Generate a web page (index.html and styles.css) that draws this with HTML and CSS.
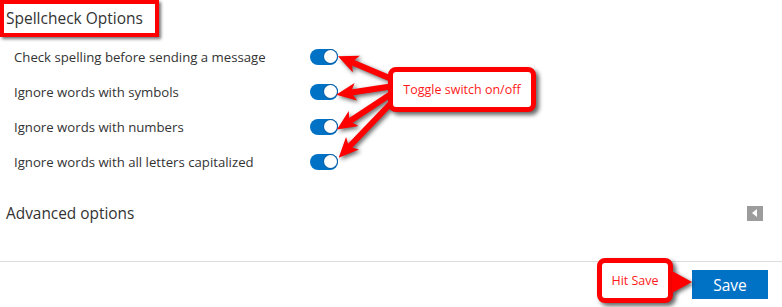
FILE: index.html
```html
<!DOCTYPE html>
<html lang="en">
<head>
    <meta charset="UTF-8">
    <meta name="viewport" content="width=device-width, initial-scale=1.0">
    <title>Spellcheck Options</title>
    <link rel="stylesheet" href="styles.css">
</head>
<body>

    <div class="page">
        <h2 class="heading"><span class="marked">Spellcheck Options</span></h2>

        <div class="options">
            <div class="option">
                <span class="label">Check spelling before sending a message</span>
                <span class="toggle"></span>
            </div>
            <div class="option">
                <span class="label">Ignore words with symbols</span>
                <span class="toggle"></span>
            </div>
            <div class="option">
                <span class="label">Ignore words with numbers</span>
                <span class="toggle"></span>
            </div>
            <div class="option">
                <span class="label">Ignore words with all letters capitalized</span>
                <span class="toggle"></span>
            </div>
        </div>

        <div class="advanced">
            <span>Advanced options</span>
            <span class="expander"></span>
        </div>

        <div class="footer">
            <div class="callout callout-save">Hit Save</div>
            <button class="save">Save</button>
        </div>

        <!-- annotation overlay -->
        <svg class="arrows" width="782" height="307" viewBox="0 0 782 307">
            <defs>
                <marker id="head" markerUnits="userSpaceOnUse" markerWidth="20" markerHeight="20"
                        refX="8" refY="10" orient="auto">
                    <path d="M0,1 L20,10 L0,19 L5,10 z" fill="#ff0000"/>
                </marker>
            </defs>
            <g stroke="#ff0000" stroke-width="6" marker-end="url(#head)">
                <line x1="394" y1="80" x2="349" y2="61"/>
                <line x1="394" y1="86" x2="348" y2="93"/>
                <line x1="394" y1="92" x2="347" y2="123"/>
                <line x1="396" y1="98" x2="347" y2="149"/>
            </g>
        </svg>
        <div class="callout callout-toggle">Toggle switch on/off</div>
    </div>

</body>
</html>
```

FILE: styles.css
```css
/* Page */
body {
    margin: 0;
    font-family: "Open Sans", "Noto Sans", sans-serif;
    color: #333;
    background-color: #fff;
}
.page {
    position: relative;
    width: 782px;
    height: 307px;
    overflow: hidden;
}
/* Heading with red highlight box */
.heading {
    margin: 0;
    font-size: 15.5px;
    font-weight: normal;
}
.marked {
    display: inline-block;
    padding: 5px 12px 5px 2px;
    border: 4px solid #ff0000;
    box-shadow: 2px 2px 3px rgba(0, 0, 0, 0.55);
    line-height: 19px;
}
/* Option rows */
.options {
    margin-top: 2px;
}
.option {
    display: flex;
    align-items: center;
    height: 35px;
    padding-left: 14px;
    font-size: 13.2px;
}
.label {
    width: 296px;
}
.toggle {
    position: relative;
    width: 28px;
    height: 16px;
    border-radius: 8px;
    background-color: #0072c6;
}
.toggle::after {
    content: "";
    position: absolute;
    right: 1px;
    top: 1px;
    width: 13px;
    height: 13px;
    border-radius: 50%;
    background-color: #fff;
    box-shadow: 0 0 0 1px #0b62a8;
}
/* Advanced options */
.advanced {
    display: flex;
    justify-content: space-between;
    align-items: center;
    height: 36px;
    margin-top: 16px;
    padding: 0 19px 0 6px;
    font-size: 15.4px;
}
.expander {
    position: relative;
    width: 16px;
    height: 15px;
    background-color: #9c9c9c;
}
.expander::after {
    content: "";
    position: absolute;
    left: 5px;
    top: 3px;
    border-right: 5px solid #fff;
    border-top: 4.5px solid transparent;
    border-bottom: 4.5px solid transparent;
}
/* Footer */
.footer {
    position: relative;
    display: flex;
    justify-content: flex-end;
    margin-top: 30px;
    padding: 8px 14px 0 0;
    border-top: 1px solid #dcdcdc;
}
.save {
    width: 76px;
    height: 29px;
    border: none;
    background-color: #0072c6;
    color: #fff;
    font-family: inherit;
    font-size: 15.5px;
}
/* Annotation callouts */
.callout {
    position: absolute;
    box-sizing: border-box;
    display: flex;
    align-items: center;
    justify-content: center;
    border: 5px solid #ff0000;
    border-radius: 8px;
    background-color: #fff;
    color: #ff1a1a;
    font-size: 12.5px;
    box-shadow: 3px 3px 4px rgba(0, 0, 0, 0.6);
}
.callout-toggle {
    left: 388px;
    top: 67px;
    width: 148px;
    height: 45px;
}
.callout-save {
    left: 597px;
    top: -4px;
    width: 76px;
    height: 45px;
}
.callout-save::after {
    content: "";
    position: absolute;
    left: 70px;
    top: 8px;
    border-left: 20px solid #ff0000;
    border-top: 11px solid transparent;
    border-bottom: 11px solid transparent;
    filter: drop-shadow(2px 2px 2px rgba(0, 0, 0, 0.6));
}
.arrows {
    position: absolute;
    left: 0;
    top: 0;
    filter: drop-shadow(2px 2px 2px rgba(0, 0, 0, 0.6));
}
```
